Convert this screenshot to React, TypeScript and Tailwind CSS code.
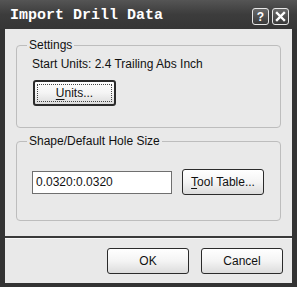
import React from "react";

const font = { fontFamily: '"Liberation Sans", Arial, sans-serif' };

function Btn({
  children,
  w,
  h,
}: {
  children: React.ReactNode;
  w: string;
  h: string;
}) {
  return (
    <div
      className={`${w} ${h} shrink-0 rounded-[3px] border border-[#2b2b2b] bg-gradient-to-b from-[#ffffff] via-[#f4f4f4] to-[#dcdcdc] p-[2px] flex`}
    >
      <div className="flex-1 flex items-center justify-center text-[12px] text-[#111]">
        {children}
      </div>
    </div>
  );
}

export default function App() {
  return (
    <div
      className="w-[297px] h-[287px] bg-[#333333] flex flex-col overflow-hidden"
      style={font}
    >
      {/* title bar */}
      <div className="h-[29px] shrink-0 flex items-center pl-[10px] pr-[8px] bg-gradient-to-b from-[#555555] via-[#3c3c3c] to-[#363636]">
        <span
          className="text-white font-bold text-[15px] leading-none pt-[2px]"
          style={{ fontFamily: '"Liberation Mono", "Courier New", monospace' }}
        >
          Import Drill Data
        </span>
        <div className="ml-auto flex gap-[3px] items-center pt-[4px]">
          <div className="w-[17px] h-[17px] rounded-[3px] border border-[#e8e8e8] bg-gradient-to-b from-[#6a6a6a] to-[#3a3a3a] flex items-center justify-center text-white text-[12px] font-bold leading-none">
            ?
          </div>
          <div className="w-[17px] h-[17px] rounded-[3px] border border-[#e8e8e8] bg-gradient-to-b from-[#6a6a6a] to-[#3a3a3a] flex items-center justify-center">
            <svg width="11" height="11" viewBox="0 0 11 11">
              <path d="M2 2 L9 9 M9 2 L2 9" stroke="#fff" strokeWidth="2.4" strokeLinecap="square" />
            </svg>
          </div>
        </div>
      </div>

      {/* client */}
      <div className="mx-[5px] mb-[4px] flex-1 bg-[#e9e9e9] flex flex-col">
        <div className="px-[11px] pt-[16px]">
          {/* Settings group */}
          <div className="relative h-[83px] border border-[#bdbdbd] rounded-[4px] pt-[11px] pl-[15px]">
            <span className="absolute -top-[8px] left-[10px] bg-[#e9e9e9] px-[2px] text-[12px] leading-[14px] text-[#111]">
              Settings
            </span>
            <div className="text-[12px] leading-[14px] text-[#111]">
              Start Units: 2.4 Trailing Abs Inch
            </div>
            <div className="mt-[9px] ml-[1px]">
              <div className="w-[83px] h-[26px] rounded-[3px] border-2 border-[#2b2b2b] bg-gradient-to-b from-[#ffffff] via-[#f4f4f4] to-[#dcdcdc] p-[2px] flex">
                <div className="flex-1 flex items-center justify-center text-[12px] text-[#111] border border-dotted border-[#444]">
                  <span>
                    <span className="underline underline-offset-2">U</span>nits...
                  </span>
                </div>
              </div>
            </div>
          </div>

          {/* Shape group */}
          <div className="relative mt-[13px] h-[80px] border border-[#bdbdbd] rounded-[4px] pl-[15px] pt-[2px] flex items-center gap-[10px]">
            <span className="absolute -top-[8px] left-[10px] bg-[#e9e9e9] px-[2px] text-[12px] leading-[14px] text-[#111]">
              Shape/Default Hole Size
            </span>
            <div className="w-[140px] h-[23px] bg-white border border-[#6f6f6f] flex items-center pl-[3px] text-[12px] text-[#111]">
              0.0320:0.0320
            </div>
            <Btn w="w-[82px]" h="h-[26px]">
              <span>
                <span className="underline underline-offset-2">T</span>ool Table...
              </span>
            </Btn>
          </div>
        </div>

        {/* separator */}
        <div className="mt-[15px] h-[2px] bg-[#3a3a3a]" />
        <div className="h-[1px] bg-[#f8f8f8]" />

        <div className="flex justify-end gap-[12px] pr-[9px] pt-[9px]">
          <Btn w="w-[82px]" h="h-[26px]">OK</Btn>
          <Btn w="w-[82px]" h="h-[26px]">Cancel</Btn>
        </div>
      </div>
    </div>
  );
}
